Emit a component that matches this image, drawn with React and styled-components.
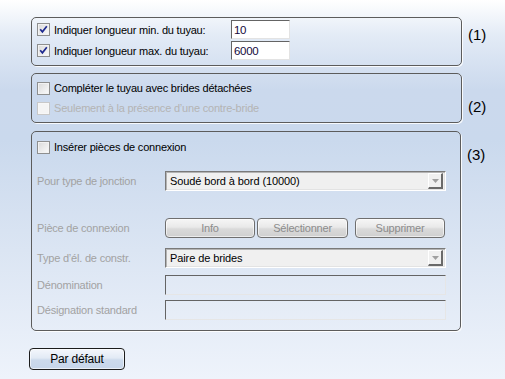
import React from "react";
import styled, { createGlobalStyle } from "styled-components";

const Global = createGlobalStyle`
  html, body { margin: 0; padding: 0; }
  body { font-family: "Liberation Sans", Arial, sans-serif; }
`;

const Page = styled.div`
  width: 505px;
  height: 379px;
  box-sizing: border-box;
  padding: 17px 0 0 31px;
  display: flex;
  flex-direction: column;
  font-family: "Liberation Sans", Arial, sans-serif;
  font-size: 11px;
  letter-spacing: -0.2px;
  color: #000;
  background: linear-gradient(
    180deg,
    #ffffff 0px,
    #e3ebf6 35px,
    #cbd9ed 90px,
    #cad9ed 140px,
    #dbe5f3 250px,
    #eef3fb 379px
  );
  overflow: hidden;
`;

const Section = styled.div`
  display: flex;
  align-items: flex-start;
  margin-top: ${(p) => p.$mt || 0}px;
`;

const Group = styled.div`
  box-sizing: border-box;
  width: ${(p) => p.$w}px;
  height: ${(p) => p.$h}px;
  border: 1px solid #5c5c5c;
  border-radius: 5px;
  box-shadow: 1px 1px 0 rgba(255, 255, 255, 0.85);
  padding: ${(p) => p.$pad};
  display: flex;
  flex-direction: column;
`;

const Marker = styled.div`
  margin: ${(p) => p.$mt}px 0 0 6px;
  font-size: 15px;
  line-height: 17px;
  letter-spacing: 0;
  color: #000;
`;

const Row = styled.div`
  display: flex;
  align-items: center;
  height: ${(p) => p.$h || 16}px;
  margin-top: ${(p) => p.$mt || 0}px;
`;

const CheckLabel = styled.label`
  display: flex;
  align-items: center;
  gap: 4px;
  width: ${(p) => (p.$w ? `${p.$w}px` : "auto")};
  color: ${(p) => (p.$disabled ? "#b4b4b4" : "#000")};
  white-space: nowrap;
`;

const Box = styled.span`
  box-sizing: border-box;
  width: 13px;
  height: 13px;
  flex: none;
  border: 1px solid ${(p) => (p.$disabled ? "#c8c8c8" : "#8e8f8f")};
  background: ${(p) =>
    p.$disabled
      ? "#f4f4f4"
      : "linear-gradient(135deg, #d9d9d9 0%, #ececec 55%, #fbfbfb 100%)"};
  box-shadow: inset 0 0 0 1px ${(p) => (p.$disabled ? "#f7f7f7" : "#f2f2f2")};
  display: flex;
  align-items: center;
  justify-content: center;
`;

const FieldLabel = styled.span`
  width: 128px;
  flex: none;
  color: #a2a2a2;
  white-space: nowrap;
`;

const SmallInput = styled.div`
  box-sizing: border-box;
  width: 59px;
  height: 19px;
  background: #fff;
  border-top: 1px solid #646464;
  border-left: 1px solid #646464;
  border-right: 1px solid #e3e3e3;
  border-bottom: 1px solid #e3e3e3;
  display: flex;
  align-items: center;
  padding-left: 2px;
  font-size: 11.5px;
  letter-spacing: -0.3px;
  color: #140a3c;
`;

const Select = styled.div`
  box-sizing: border-box;
  width: 281px;
  height: 20px;
  background: #f0f0f0;
  border-top: 1px solid #7a7a7a;
  border-left: 1px solid #7a7a7a;
  border-right: 1px solid #ffffff;
  border-bottom: 1px solid #ffffff;
  box-shadow: inset 1px 1px 0 #b4b4b4, inset -1px -1px 0 #e3e3e3;
  display: flex;
  align-items: center;
  padding: 0 2px 0 4px;
  font-size: 11px;
  letter-spacing: -0.1px;
  color: #000;
`;

const SelectText = styled.span`
  flex: 1;
  white-space: nowrap;
`;

const Arrow = styled.span`
  box-sizing: border-box;
  width: 15px;
  height: 16px;
  background: #f0f0f0;
  border-top: 1px solid #ffffff;
  border-left: 1px solid #ffffff;
  border-right: 2px solid #6a6a6a;
  border-bottom: 2px solid #6a6a6a;
  display: flex;
  align-items: center;
  justify-content: center;
`;

const FlatInput = styled.div`
  box-sizing: border-box;
  width: 281px;
  height: 20px;
  border-top: 1px solid #646464;
  border-left: 1px solid #646464;
  border-right: 1px solid #e6e6e6;
  border-bottom: 1px solid #e6e6e6;
  background: rgba(255, 255, 255, 0.08);
`;

const Button = styled.button`
  box-sizing: border-box;
  width: ${(p) => p.$w}px;
  height: ${(p) => p.$h || 20}px;
  margin: 0 0 0 ${(p) => p.$ml || 0}px;
  padding: 0;
  border: 1px solid ${(p) => (p.$primary ? "#1c1c1c" : "#6f6f6f")};
  border-radius: 4px;
  font-family: "Liberation Sans", Arial, sans-serif;
  font-size: ${(p) => (p.$primary ? 12 : 11)}px;
  letter-spacing: -0.2px;
  color: ${(p) => (p.$primary ? "#000" : "#8c8c8c")};
  background: ${(p) =>
    p.$primary
      ? "linear-gradient(180deg, #f4f7fc 0%, #e2eaf5 45%, #ccdaec 55%, #c6d5ea 100%)"
      : "linear-gradient(180deg, #f6f6f6 0%, #e9e9e9 45%, #dadada 55%, #cfcfcf 100%)"};
  box-shadow: inset 0 0 0 1px rgba(255, 255, 255, 0.6);
  cursor: default;
`;

const Footer = styled.div`
  margin: 17px 0 0 -2px;
`;

function Check({ checked, disabled }) {
  return (
    <Box $disabled={disabled}>
      {checked && (
        <svg width="9" height="9" viewBox="0 0 9 9">
          <path
            d="M1.2 4.2 L3.4 6.8 L7.8 1.2"
            fill="none"
            stroke="#1e2a8f"
            strokeWidth="1.7"
          />
        </svg>
      )}
    </Box>
  );
}

function DropArrow() {
  return (
    <Arrow>
      <svg width="7" height="4" viewBox="0 0 7 4">
        <path d="M0 0 H7 L3.5 4 Z" fill="#a0a0a0" />
      </svg>
    </Arrow>
  );
}

export default function App() {
  return (
    <>
      <Global />
      <Page>
        <Section>
          <Group $w={431} $h={49} $pad="2px 0 5px 5px">
            <Row $h={19}>
              <CheckLabel $w={194}>
                <Check checked />
                Indiquer longueur min. du tuyau:
              </CheckLabel>
              <SmallInput>10</SmallInput>
            </Row>
            <Row $h={19} $mt={2}>
              <CheckLabel $w={194}>
                <Check checked />
                Indiquer longueur max. du tuyau:
              </CheckLabel>
              <SmallInput>6000</SmallInput>
            </Row>
          </Group>
          <Marker $mt={9}>(1)</Marker>
        </Section>

        <Section $mt={7}>
          <Group $w={431} $h={50} $pad="6px 0 6px 5px">
            <Row>
              <CheckLabel>
                <Check />
                Compléter le tuyau avec brides détachées
              </CheckLabel>
            </Row>
            <Row $mt={4}>
              <CheckLabel $disabled>
                <Check disabled />
                Seulement à la présence d’une contre-bride
              </CheckLabel>
            </Row>
          </Group>
          <Marker $mt={25}>(2)</Marker>
        </Section>

        <Section $mt={8}>
          <Group $w={430} $h={200} $pad="7px 0 10px 5px">
            <Row>
              <CheckLabel>
                <Check />
                Insérer pièces de connexion
              </CheckLabel>
            </Row>
            <Row $h={20} $mt={16}>
              <FieldLabel>Pour type de jonction</FieldLabel>
              <Select>
                <SelectText>Soudé bord à bord (10000)</SelectText>
                <DropArrow />
              </Select>
            </Row>
            <Row $h={20} $mt={27}>
              <FieldLabel>Pièce de connexion</FieldLabel>
              <Button $w={90}>Info</Button>
              <Button $w={91} $ml={2}>Sélectionner</Button>
              <Button $w={90} $ml={7}>Supprimer</Button>
            </Row>
            <Row $h={20} $mt={10}>
              <FieldLabel>Type d’él. de constr.</FieldLabel>
              <Select>
                <SelectText>Paire de brides</SelectText>
                <DropArrow />
              </Select>
            </Row>
            <Row $h={20} $mt={7}>
              <FieldLabel>Dénomination</FieldLabel>
              <FlatInput />
            </Row>
            <Row $h={20} $mt={5}>
              <FieldLabel>Désignation standard</FieldLabel>
              <FlatInput />
            </Row>
          </Group>
          <Marker $mt={15}>(3)</Marker>
        </Section>

        <Footer>
          <Button $primary $w={96} $h={22}>
            Par défaut
          </Button>
        </Footer>
      </Page>
    </>
  );
}
